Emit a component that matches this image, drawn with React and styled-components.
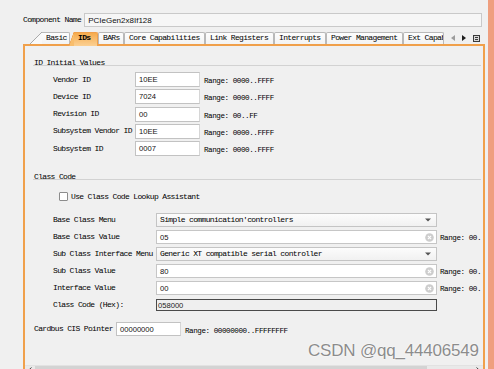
import React from 'react';
import styled, { createGlobalStyle } from 'styled-components';

const MONO = `"Liberation Mono", "DejaVu Sans Mono", monospace`;
const SANS = `"Liberation Sans", Arial, sans-serif`;

const Global = createGlobalStyle`
  html, body { margin: 0; padding: 0; background: #f0f0f0; }
  body { font-family: ${MONO}; }
  * { box-sizing: border-box; }
`;

const Screen = styled.div`
  width: 494px;
  height: 369px;
  position: relative;
  overflow: hidden;
  display: flex;
  background: #f0f0f0;
`;

const Main = styled.div`
  width: 488px;
  display: flex;
  flex-direction: column;
`;

const SideStrip = styled.div`
  width: 6px;
  background: #ef9f7f;
`;

const Text = styled.span`
  font-family: ${MONO};
  font-size: 8px;
  letter-spacing: -0.65px;
  color: #000;
  white-space: nowrap;
  line-height: 10px;
`;

const TopRow = styled.div`
  margin-top: 13px;
  padding-left: 23px;
  height: 14px;
  display: flex;
  align-items: center;
`;

const NameField = styled.div`
  margin-left: 3px;
  width: 398px;
  height: 14px;
  border: 1px solid #c9c9c9;
  background: #f6f6f6;
  display: flex;
  align-items: center;
  padding-left: 3px;
  font-family: ${SANS};
  font-size: 8px;
  color: #111;
`;

const TabBar = styled.div`
  margin-top: 5px;
  height: 12px;
  padding-left: 30px;
  display: flex;
  align-items: flex-start;
`;

const Tab = styled.div`
  position: relative;
  flex: none;
  width: ${p => p.$w}px;
  margin-left: ${p => p.$ml || 0}px;
  height: ${p => p.$active ? 14 : 12}px;
  margin-bottom: ${p => p.$active ? -2 : 0}px;
  z-index: ${p => p.$active ? 2 : 1};
  padding-left: 4px;
  border: 1px solid ${p => p.$active ? '#f0a04b' : '#b9b9b9'};
  border-bottom: none;
  border-left: ${p => p.$slant ? 'none' : undefined};
  border-radius: ${p => p.$slant ? '0 2px 0 0' : '2px 2px 0 0'};
  background: ${p => p.$active
    ? 'linear-gradient(#f6ab4c, #fbd093)'
    : 'linear-gradient(#fdfdfd, #f3f3f3)'};
  font-family: ${MONO};
  font-size: 8px;
  letter-spacing: -0.65px;
  font-weight: ${p => p.$active ? 700 : 400};
  line-height: 10px;
  color: #000;
  white-space: nowrap;
  overflow: ${p => p.$clip ? 'hidden' : 'visible'};

  &::before {
    content: ${p => p.$slant ? '""' : 'none'};
    position: absolute;
    top: -1px;
    left: -${p => p.$slant}px;
    width: ${p => p.$slant}px;
    height: calc(100% + 1px);
    background: ${p => p.$active
      ? 'linear-gradient(to bottom right, transparent calc(50% - 0.6px), #f0a04b 50%, #f8bd6c calc(50% + 0.6px))'
      : 'linear-gradient(to bottom right, transparent calc(50% - 0.6px), #a9a9a9 50%, #f9f9f9 calc(50% + 0.6px))'};
  }
`;

const NavIcons = styled.div`
  margin-left: 7px;
  height: 12px;
  display: flex;
  align-items: center;
  gap: 7px;
`;

const Panel = styled.div`
  margin-left: 23px;
  width: 462px;
  height: 333px;
  flex: none;
  border: 2px solid #f0a04b;
  border-bottom: none;
  display: flex;
  flex-direction: column;
  background: #f0f0f0;
`;

const PanelBody = styled.div`
  flex: 1;
  padding-right: 2px;
  overflow: hidden;
  display: flex;
  flex-direction: column;
`;

const SectionHeader = styled.div`
  margin-top: ${p => p.$mt}px;
  margin-left: 8px;
  padding-left: 1px;
  height: 9px;
  border-bottom: 1px solid #d2d2d2;
  font-family: ${MONO};
  font-size: 8px;
  letter-spacing: -0.65px;
  line-height: 11px;
  color: #000;
  white-space: nowrap;
`;

const IdList = styled.div`
  margin-top: 6px;
  display: flex;
  flex-direction: column;
  gap: 2.3px;
`;

const IdRow = styled.div`
  height: 15px;
  padding-left: 28px;
  display: grid;
  grid-template-columns: 82px 65px auto;
  align-items: center;
`;

const ValueBox = styled.div`
  height: ${p => p.$h || 15}px;
  border: 1px solid #c2c2c2;
  border-right-color: #d6d6d6;
  background: #fff;
  display: flex;
  align-items: center;
  padding-left: 3px;
  font-family: ${SANS};
  font-size: 7.6px;
  color: #111;
`;

const RangeText = styled(Text)`
  margin-left: 4px;
  margin-top: 3px;
  font-size: 7.6px;
  letter-spacing: -0.45px;
`;

const CheckRow = styled.div`
  margin-top: 12px;
  padding-left: 34px;
  height: 9px;
  display: flex;
  align-items: center;
  gap: 3px;
`;

const CheckBox = styled.div`
  width: 9px;
  height: 9px;
  border: 1px solid #8c8c8c;
  border-radius: 1px;
  background: #fff;
`;

const ClassList = styled.div`
  margin-top: 12px;
  display: flex;
  flex-direction: column;
  gap: 3px;
`;

const ClassRow = styled.div`
  height: 14px;
  padding-left: 28px;
  display: grid;
  grid-template-columns: 103px 281px auto;
  align-items: center;
  overflow: hidden;
`;

const Select = styled.div`
  height: 14px;
  border: 1px solid #c4c4c4;
  background: linear-gradient(#fcfcfc, #f1f1f1);
  display: flex;
  align-items: center;
  justify-content: space-between;
  padding: 0 5px 0 3px;
`;

const Field = styled.div`
  height: 14px;
  border: 1px solid #c6c6c6;
  background: #fff;
  display: flex;
  align-items: center;
  justify-content: space-between;
  padding: 0 2px 0 3px;
  font-family: ${SANS};
  font-size: 7.6px;
  color: #111;
`;

const HexBox = styled.div`
  height: 12px;
  align-self: start;
  margin-top: 1px;
  border: 1px solid #4a4a4a;
  background: #efefef;
  display: flex;
  align-items: center;
  padding-left: 1px;
  font-family: ${SANS};
  font-size: 7.6px;
  color: #222;
`;

const ClassRange = styled(RangeText)`
  margin-left: 3px;
  margin-top: 2px;
`;

const CardRow = styled.div`
  margin-top: 10px;
  height: 14px;
  padding-left: 9px;
  display: grid;
  grid-template-columns: 82px 65px auto;
  align-items: center;
`;

const ScrollBar = styled.div`
  margin-top: auto;
  height: 12px;
  display: flex;
  align-items: stretch;
  background: #e9e9e9;
  border-top: 1px solid #e2e2e2;
`;

const ScrollArrow = styled.div`
  width: 10px;
  display: flex;
  align-items: flex-start;
  justify-content: center;
  padding-top: 1px;
`;

const Thumb = styled.div`
  width: 392px;
  background: #d3d3d3;
`;

const Track = styled.div`
  flex: 1;
`;

const Watermark = styled.div`
  position: absolute;
  left: 308px;
  top: 342px;
  font-family: ${SANS};
  font-size: 17px;
  line-height: 17px;
  color: #8c8c8c;
  letter-spacing: -0.2px;
  text-shadow: 0 0 1px #fff, 0 0 2px #fff;
  white-space: nowrap;
`;

const Caret = () => (
  <svg width="6" height="4" viewBox="0 0 6 4"><path d="M0 0.5 L6 0.5 L3 3.5Z" fill="#555" /></svg>
);

const Clear = () => (
  <svg width="9" height="9" viewBox="0 0 9 9">
    <circle cx="4.5" cy="4.5" r="4.3" fill="#cdcdcd" />
    <path d="M2.9 2.9 L6.1 6.1 M6.1 2.9 L2.9 6.1" stroke="#fff" strokeWidth="1.1" />
  </svg>
);

const tabs = [
  { t: 'Basic', w: 28, ml: 12, slant: 12 },
  { t: 'IDs', w: 24, ml: 4, slant: 5, active: true },
  { t: 'BARs', w: 26 },
  { t: 'Core Capabilities', w: 81 },
  { t: 'Link Registers', w: 69 },
  { t: 'Interrupts', w: 52 },
  { t: 'Power Management', w: 77 },
  { t: 'Ext Capabilities', w: 41, clip: true },
];

const idRows = [
  ['Vendor ID', '10EE', 'Range: 0000..FFFF'],
  ['Device ID', '7024', 'Range: 0000..FFFF'],
  ['Revision ID', '00', 'Range: 00..FF'],
  ['Subsystem Vendor ID', '10EE', 'Range: 0000..FFFF'],
  ['Subsystem ID', '0007', 'Range: 0000..FFFF'],
];

const classRows = [
  { label: 'Base Class Menu', kind: 'select', value: "Simple communication'controllers" },
  { label: 'Base Class Value', kind: 'field', value: '05' },
  { label: 'Sub Class Interface Menu', kind: 'select', value: 'Generic XT compatible serial controller' },
  { label: 'Sub Class Value', kind: 'field', value: '80' },
  { label: 'Interface Value', kind: 'field', value: '00' },
  { label: 'Class Code (Hex):', kind: 'hex', value: '058000' },
];

export default function App() {
  return (
    <Screen>
      <Global />
      <Main>
        <TopRow>
          <Text>Component Name</Text>
          <NameField>PCIeGen2x8If128</NameField>
        </TopRow>
        <TabBar>
          {tabs.map(tb => (
            <Tab key={tb.t} $w={tb.w} $ml={tb.ml} $slant={tb.slant} $active={tb.active} $clip={tb.clip}>
              {tb.t}
            </Tab>
          ))}
          <NavIcons>
            <svg width="4" height="6" viewBox="0 0 4 6"><path d="M4 0 L0 3 L4 6Z" fill="#9c9c9c" /></svg>
            <svg width="4" height="6" viewBox="0 0 4 6"><path d="M0 0 L4 3 L0 6Z" fill="#1e1e1e" /></svg>
            <svg width="7" height="7" viewBox="0 0 7 7">
              <rect x="0.5" y="0.5" width="6" height="6" fill="#d8d8d8" stroke="#3a3a3a" />
              <path d="M2 2.5 H5 M2 4.5 H5" stroke="#3a3a3a" />
            </svg>
          </NavIcons>
        </TabBar>
        <Panel>
          <PanelBody>
            <SectionHeader $mt={11}>ID Initial Values</SectionHeader>
            <IdList>
              {idRows.map(([l, v, r]) => (
                <IdRow key={l}>
                  <Text>{l}</Text>
                  <ValueBox>{v}</ValueBox>
                  <RangeText>{r}</RangeText>
                </IdRow>
              ))}
            </IdList>
            <SectionHeader $mt={15}>Class Code</SectionHeader>
            <CheckRow>
              <CheckBox />
              <Text>Use Class Code Lookup Assistant</Text>
            </CheckRow>
            <ClassList>
              {classRows.map(r => (
                <ClassRow key={r.label}>
                  <Text>{r.label}</Text>
                  {r.kind === 'select' && (
                    <Select><Text>{r.value}</Text><Caret /></Select>
                  )}
                  {r.kind === 'field' && (
                    <Field><span>{r.value}</span><Clear /></Field>
                  )}
                  {r.kind === 'hex' && <HexBox>{r.value}</HexBox>}
                  {r.kind === 'field' && <ClassRange>Range: 00..FF</ClassRange>}
                </ClassRow>
              ))}
            </ClassList>
            <CardRow>
              <Text>Cardbus CIS Pointer</Text>
              <ValueBox $h={14}>00000000</ValueBox>
              <RangeText>Range: 00000000..FFFFFFFF</RangeText>
            </CardRow>
          </PanelBody>
          <ScrollBar>
            <ScrollArrow>
              <svg width="4" height="6" viewBox="0 0 4 6"><path d="M3.5 0.5 L0.8 3 L3.5 5.5" fill="none" stroke="#444" /></svg>
            </ScrollArrow>
            <Thumb />
            <Track />
            <ScrollArrow>
              <svg width="4" height="6" viewBox="0 0 4 6"><path d="M0.5 0.5 L3.2 3 L0.5 5.5" fill="none" stroke="#444" /></svg>
            </ScrollArrow>
          </ScrollBar>
        </Panel>
      </Main>
      <SideStrip />
      <Watermark>CSDN @qq_44406549</Watermark>
    </Screen>
  );
}
